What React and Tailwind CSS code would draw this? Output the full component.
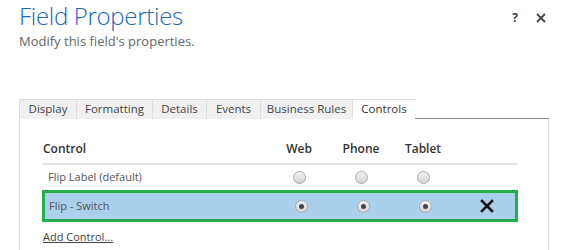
import React from "react";

const tabs = [
  ["Display", "w-[57px]"],
  ["Formatting", "w-[76px]"],
  ["Details", "w-[54px]"],
  ["Events", "w-[54px]"],
  ["Business Rules", "w-[92px]"],
  ["Controls", "w-[63px]"],
];

const Radio = ({ checked }) => (
  <span className="inline-flex w-[13px] h-[13px] rounded-full border border-[#a8a8a8] bg-gradient-to-b from-[#f2f2f2] to-[#d4d4d4] items-center justify-center">
    {checked && <span className="w-[5px] h-[5px] rounded-full bg-[#444]" />}
  </span>
);

const Row = ({ label, selected }) => (
  <div
    className={`grid grid-cols-[225px_62px_62px_62px_62px] items-center ${
      selected ? "h-[32px] border-[3px] border-[#24ad4b] bg-[#abd0ec] -mx-[1px]" : "h-[25px]"
    }`}
  >
    <span className={`${selected ? "pl-[4px]" : "pl-[5px]"} text-[11px] text-[#555]`}>{label}</span>
    <span className="flex justify-center"><Radio checked={selected} /></span>
    <span className="flex justify-center"><Radio checked={selected} /></span>
    <span className="flex justify-center"><Radio checked={selected} /></span>
    <span className="flex justify-center">
      {selected && (
        <svg width="14" height="14" viewBox="0 0 14 14">
          <path d="M2 2 L12 12 M12 2 L2 12" stroke="#111" strokeWidth="2.6" strokeLinecap="square" />
        </svg>
      )}
    </span>
  </div>
);

export default function App() {
  return (
    <div className="w-[567px] h-[250px] bg-white overflow-hidden font-['Open_Sans',sans-serif]">
      <div className="flex justify-between pl-[19px] pr-[21px]">
        <div>
          <h1 className="text-[24px] leading-[32px] text-[#2266b8] font-light tracking-[-0.3px]">Field Properties</h1>
          <p className="text-[13px] leading-[16px] text-[#666] mt-[1px]">Modify this field's properties.</p>
        </div>
        <div className="flex gap-[18px] pt-[9px] text-[#444] font-bold text-[12px]">
          <span>?</span>
          <svg width="10" height="10" viewBox="0 0 10 10" className="mt-[4px]">
            <path d="M1 1 L9 9 M9 1 L1 9" stroke="#444" strokeWidth="1.8" />
          </svg>
        </div>
      </div>

      <div className="ml-[19px] w-[530px] mt-[50px]">
        <div className="flex h-[20px]">
          {tabs.map(([t, w]) => {
            const active = t === "Controls";
            return (
              <div
                key={t}
                className={`${w} text-center text-[11.5px] leading-[18px] border-t border-l border-[#ddd] last:border-r ${
                  active ? "bg-white text-[#333]" : "bg-[#f0f0f0] text-[#444]"
                }`}
              >
                {t}
              </div>
            );
          })}
          <div className="flex-1 border-b border-[#8a8a8a]" />
        </div>
        <div className="border-l border-r border-[#d4d4d4] h-[200px] pl-[23px] pr-[31px] pt-[16px]">
          <div className="grid grid-cols-[225px_62px_62px_62px_62px] h-[30px] items-center border-b-2 border-[#e2e2e2] text-[12px] font-semibold text-[#333]">
            <span>Control</span>
            <span className="text-center">Web</span>
            <span className="text-center">Phone</span>
            <span className="text-center">Tablet</span>
            <span />
          </div>
          <Row label="Flip Label (default)" />
          <Row label="Flip - Switch" selected />
          <div className="pt-[1px]">
            <a className="text-[11px] text-[#444] underline">Add Control...</a>
          </div>
        </div>
      </div>
    </div>
  );
}
